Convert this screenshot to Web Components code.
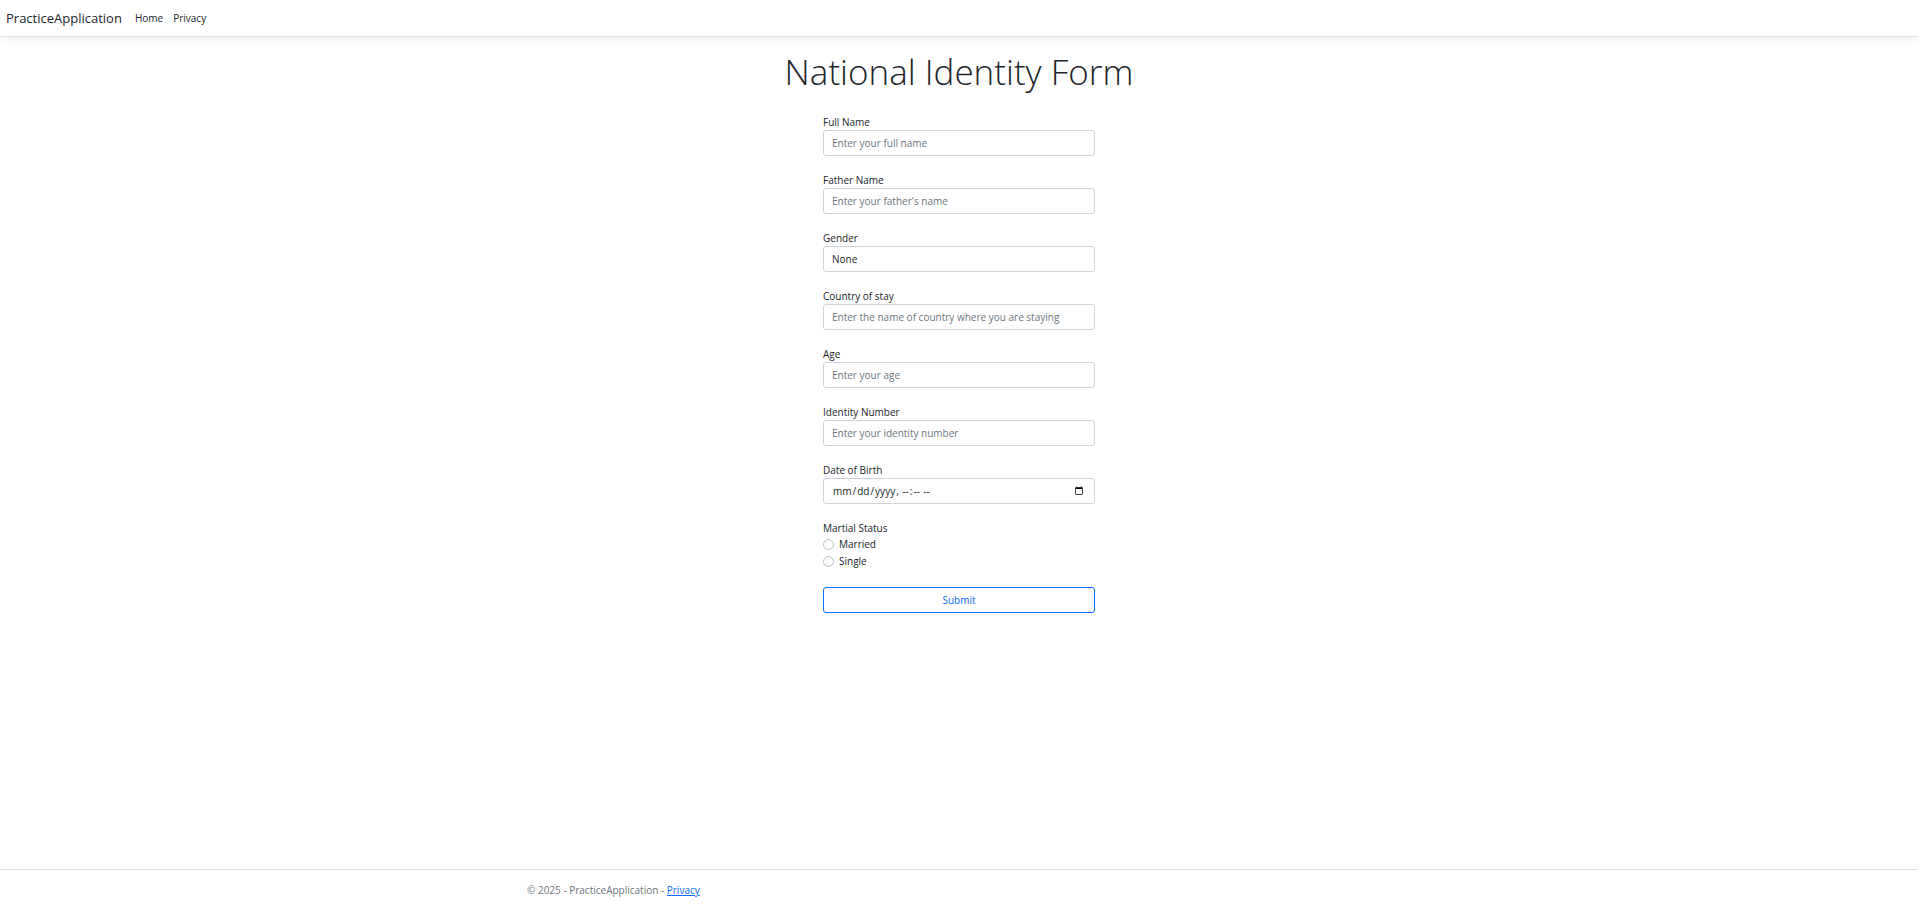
<!DOCTYPE html>
<html lang="en">
<head>
<meta charset="utf-8">
<title>National Identity Form - PracticeApplication</title>
<style>
  body {
    margin: 0;
    min-height: 100vh;
    display: flex;
    flex-direction: column;
    background: #fff;
    color: #212529;
    font: 10px/16px "Open Sans", "Noto Sans", sans-serif;
    --border: #ced4da;
    --line: #dee2e6;
    --muted: #6c757d;
    --primary: #0d6efd;
  }
  main { flex: 1; }
</style>
</head>
<body>
<site-header brand="PracticeApplication">
  <nav-link href="#home">Home</nav-link>
  <nav-link href="#privacy">Privacy</nav-link>
</site-header>
<main>
  <identity-form>
    <span slot="title">National Identity Form</span>
    <form-field label="Full Name" placeholder="Enter your full name"></form-field>
    <form-field label="Father Name" placeholder="Enter your father's name"></form-field>
    <form-field label="Gender" type="select" options="None,Male,Female"></form-field>
    <form-field label="Country of stay" placeholder="Enter the name of country where you are staying"></form-field>
    <form-field label="Age" placeholder="Enter your age"></form-field>
    <form-field label="Identity Number" placeholder="Enter your identity number"></form-field>
    <form-field label="Date of Birth" type="datetime-local"></form-field>
    <radio-field label="Martial Status" options="Married,Single"></radio-field>
  </identity-form>
</main>
<site-footer>© 2025 - PracticeApplication -</site-footer>

<script>
class BaseElement extends HTMLElement {
  connectedCallback() {
    if (this.shadowRoot) return;
    this.attachShadow({ mode: "open" }).innerHTML = this.render();
  }
}

customElements.define("site-header", class extends BaseElement {
  render() {
    return `
      <style>
        :host { display: block; border-bottom: 1px solid var(--line); box-shadow: 0 3px 8px rgba(0,0,0,.06); }
        nav { display: flex; align-items: center; height: 36px; padding: 0 6px; box-sizing: border-box; }
        .brand { font-size: 13px; line-height: 20px; color: inherit; text-decoration: none; margin-right: 8px; }
      </style>
      <nav><a class="brand" href="#home">${this.getAttribute("brand")}</a><slot></slot></nav>`;
  }
});

customElements.define("nav-link", class extends BaseElement {
  render() {
    return `
      <style>
        :host { display: block; }
        a { display: block; padding: 0 5px; color: inherit; text-decoration: none; }
      </style>
      <a href="${this.getAttribute("href")}"><slot></slot></a>`;
  }
});

customElements.define("identity-form", class extends BaseElement {
  render() {
    return `
      <style>
        :host { display: block; padding: 14px 8px; }
        h1 { margin: 0 0 22px; font-size: 35px; line-height: 41px; font-weight: 300; text-align: center; }
        form { display: flex; flex-direction: column; gap: 16px; width: 100%; max-width: 272px; margin: 0 auto; }
        button {
          height: 26px; padding: 0 8px; border: 1px solid var(--primary); border-radius: 3px;
          background: transparent; color: var(--primary); font: inherit; cursor: pointer;
        }
      </style>
      <h1><slot name="title"></slot></h1>
      <form><slot></slot><button type="button">Submit</button></form>`;
  }
});

customElements.define("form-field", class extends BaseElement {
  control() {
    const type = this.getAttribute("type") || "text";
    if (type === "select") {
      const options = this.getAttribute("options").split(",").map(o => `<option>${o}</option>`).join("");
      return `<select id="control">${options}</select>`;
    }
    return `<input id="control" type="${type}" placeholder="${this.getAttribute("placeholder") || ""}">`;
  }
  render() {
    return `
      <style>
        :host { display: block; }
        label { display: block; }
        input, select {
          display: block; width: 100%; height: 26px; box-sizing: border-box; margin: 0; padding: 4px 8px;
          border: 1px solid var(--border); border-radius: 3px; background: #fff;
          color: inherit; font: inherit; appearance: none;
        }
        input::placeholder { color: var(--muted); opacity: 1; }
        ::-webkit-datetime-edit, ::-webkit-datetime-edit-fields-wrapper { padding: 0; }
      </style>
      <label for="control">${this.getAttribute("label")}</label>
      ${this.control()}`;
  }
});

customElements.define("radio-field", class extends BaseElement {
  render() {
    const rows = this.getAttribute("options").split(",").map(o =>
      `<label><input type="radio" name="choice" value="${o}">${o}</label>`).join("");
    return `
      <style>
        :host { display: block; }
        fieldset { margin: 0; padding: 0 0 1px; border: 0; }
        legend { padding: 0; }
        label { display: flex; align-items: center; gap: 5px; height: 16px; margin-bottom: 1px; }
        input {
          appearance: none; width: 11px; height: 11px; margin: 0; box-sizing: border-box;
          border: 1px solid #bfbfbf; border-radius: 50%; background: #fff;
        }
        input:checked { border: 3px solid var(--primary); }
      </style>
      <fieldset><legend>${this.getAttribute("label")}</legend>${rows}</fieldset>`;
  }
});

customElements.define("site-footer", class extends BaseElement {
  render() {
    return `
      <style>
        :host { display: block; border-top: 1px solid var(--line); color: var(--muted); }
        footer { max-width: 880px; box-sizing: border-box; margin: 0 auto; padding: 2px 8px 0; line-height: 36px; }
        a { color: var(--primary); }
      </style>
      <footer><slot></slot> <a href="#privacy">Privacy</a></footer>`;
  }
});
</script>
</body>
</html>
